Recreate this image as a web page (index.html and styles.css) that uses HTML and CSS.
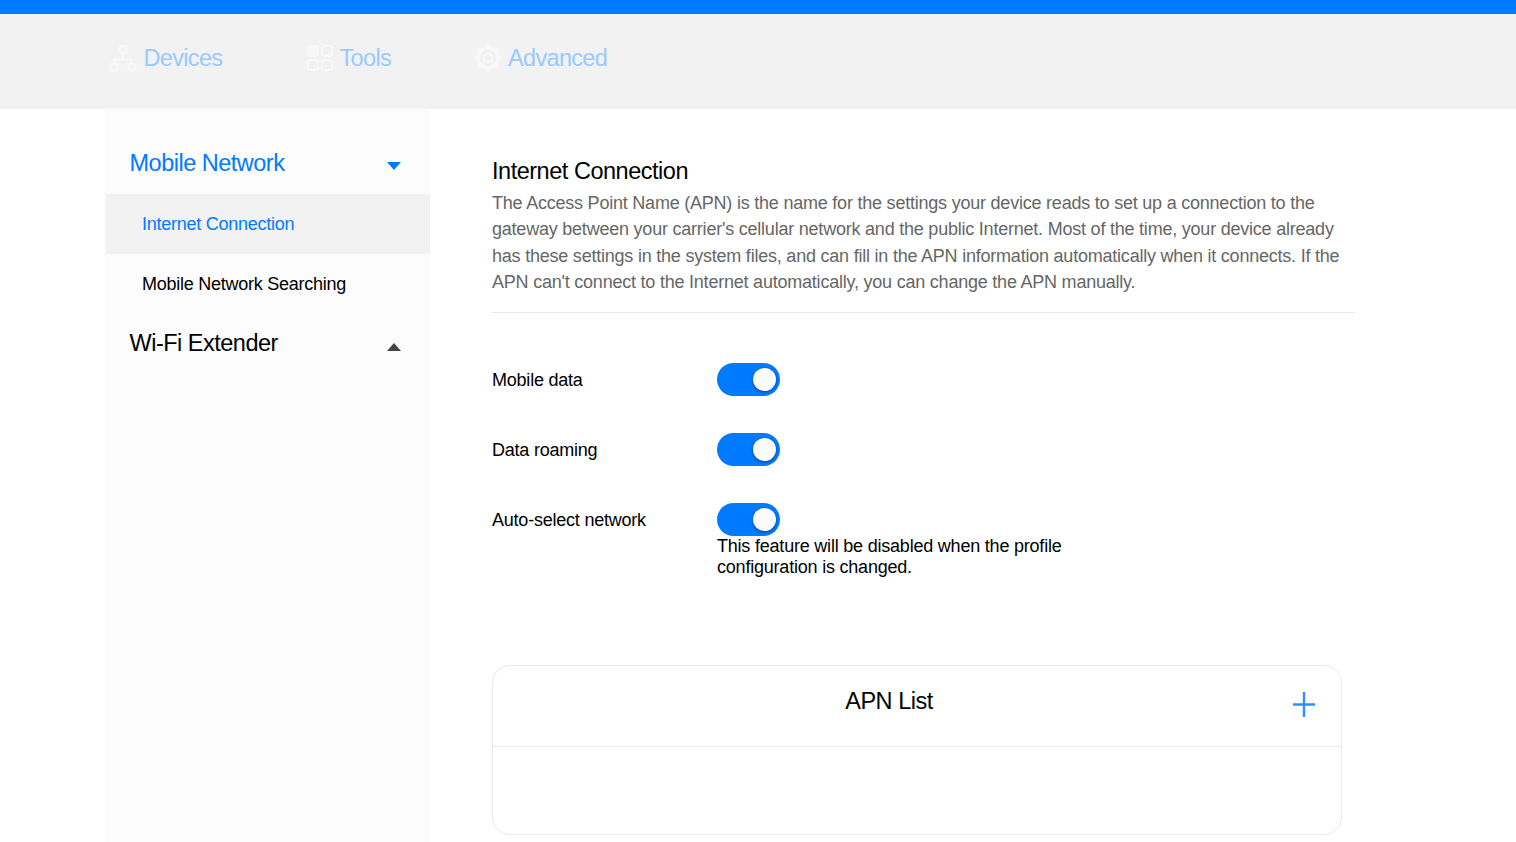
FILE: index.html
```html
<!DOCTYPE html>
<html lang="en">
<head>
<meta charset="utf-8">
<title>Internet Connection</title>
<link rel="stylesheet" href="styles.css">
</head>
<body>
<div class="topbar"></div>
<nav class="nav">
  <a class="nav-item nav-devices">
    <svg class="nav-icon" width="28" height="28" viewBox="0 0 28 28" fill="none" stroke="#f8f8f8" stroke-width="2.6">
      <circle cx="14" cy="5.500" r="3.600"/>
      <path d="M14 9.500v6M5.500 19v-3.500h17V19"/>
      <rect x="1.500" y="20" width="7" height="6.500" rx="2"/>
      <rect x="19.500" y="20" width="7" height="6.500" rx="2"/>
    </svg>
    <span>Devices</span>
  </a>
  <a class="nav-item nav-tools">
    <svg class="nav-icon" width="28" height="28" viewBox="0 0 28 28" fill="none" stroke="#f8f8f8" stroke-width="2.2">
      <rect x="2" y="2" width="10" height="10" rx="2.500" fill="#f8f8f8"/>
      <rect x="16" y="2" width="10" height="10" rx="2.500"/>
      <rect x="2" y="16" width="10" height="10" rx="2.500"/>
      <rect x="16" y="16" width="10" height="10" rx="2.500"/>
    </svg>
    <span>Tools</span>
  </a>
  <a class="nav-item nav-advanced">
    <svg class="nav-icon" width="30" height="30" viewBox="0 0 30 30" fill="none" stroke="#f8f8f8">
      <circle cx="15" cy="15" r="10" stroke-width="3.600"/>
      <circle cx="15" cy="15" r="4.200" stroke-width="2.600"/>
      <path d="M15 1v4M15 25v4M1 15h4M25 15h4M5 5l3 3M22 22l3 3M25 5l-3 3M8 22l-3 3" stroke-width="4.200"/>
    </svg>
    <span>Advanced</span>
  </a>
</nav>
<div class="layout">
  <aside class="sidebar">
    <div class="group-head head-active">
      <span>Mobile Network</span>
      <i class="caret caret-down"></i>
    </div>
    <a class="side-link side-link-active">Internet Connection</a>
    <a class="side-link">Mobile Network Searching</a>
    <div class="group-head head-plain">
      <span>Wi-Fi Extender</span>
      <i class="caret caret-up"></i>
    </div>
  </aside>
  <main class="content">
    <h1 class="title">Internet Connection</h1>
    <p class="desc">The Access Point Name (APN) is the name for the settings your device reads to set up a connection to the gateway between your carrier's cellular network and the public Internet. Most of the time, your device already has these settings in the system files, and can fill in the APN information automatically when it connects. If the APN can't connect to the Internet automatically, you can change the APN manually.</p>
    <div class="settings">
      <div class="row">
        <div class="row-label">Mobile data</div>
        <div class="row-value"><span class="switch"><span class="knob"></span></span></div>
      </div>
      <div class="row">
        <div class="row-label">Data roaming</div>
        <div class="row-value"><span class="switch"><span class="knob"></span></span></div>
      </div>
      <div class="row">
        <div class="row-label">Auto-select network</div>
        <div class="row-value">
          <span class="switch"><span class="knob"></span></span>
          <p class="note">This feature will be disabled when the profile configuration is changed.</p>
        </div>
      </div>
    </div>
    <section class="apn">
      <header class="apn-head">
        <h2 class="apn-title">APN List</h2>
        <svg class="apn-add" width="24" height="26" viewBox="0 0 24 26" fill="none" stroke="#2f8fff" stroke-width="2.400"><path d="M12 1v25M1 13.500h22"/></svg>
      </header>
      <div class="apn-body"></div>
    </section>
  </main>
</div>
</body>
</html>
```

FILE: styles.css
```css
* { box-sizing: border-box; }
html, body { margin: 0; padding: 0; height: 100%; overflow: hidden; }
body { background: #fff; color: #000; font-family: "Liberation Sans", Arial, sans-serif; display: flex; flex-direction: column; height: 842px; }
.topbar { height: 14px; background: #007aff; flex: none; }
.nav { height: 95px; flex: none; background: #f2f2f2; display: flex; align-items: center; padding: 0 0 7px 109px; }
.nav-item { display: flex; align-items: center; color: #99caff; font-size: 23.500px; letter-spacing: -0.67px; }
.nav-icon { flex: none; margin-right: 6.500px; }
.nav-devices { width: 197px; }
.nav-tools { width: 167px; }
.nav-tools .nav-icon { margin-right: 5.500px; }
.nav-advanced .nav-icon { margin-right: 5.500px; margin-left: -0.500px; }
.layout { flex: 1; display: flex; min-height: 0; padding-left: 105px; }
.sidebar { width: 325px; flex: none; background: #fcfcfc; padding-top: 25px; }
.group-head { height: 60px; display: flex; align-items: center; justify-content: space-between; padding: 0 29.500px 2px 24.500px; font-size: 23.500px; letter-spacing: -0.5px; }
.head-active { color: #007aff; }
.head-plain { color: #000; }
.caret { width: 0; height: 0; border-left: 7.500px solid transparent; border-right: 7.500px solid transparent; }
.caret-down { border-top: 8px solid #007aff; margin-top: 6px; }
.caret-up { border-bottom: 8px solid #444; margin-top: 8px; }
.side-link { display: flex; align-items: center; height: 60px; padding-left: 37px; font-size: 18px; letter-spacing: -0.25px; color: #000; }
.side-link-active { color: #007aff; background: #f2f2f2; }
.content { width: 863px; margin-left: 62px; padding-top: 47px; }
.title { margin: 0 0 4px; font-size: 23.500px; font-weight: 400; line-height: 30px; letter-spacing: -0.48px; color: #000; }
.desc { margin: 0; padding-bottom: 16px; border-bottom: 1px solid #e9e9e9; font-size: 18px; line-height: 26.400px; letter-spacing: -0.22px; color: #666; }
.settings { padding-top: 50px; }
.row { display: flex; margin-bottom: 37px; }
.row:last-child { margin-bottom: 0; }
.row-label { width: 225px; height: 33px; flex: none; font-size: 18px; letter-spacing: -0.22px; line-height: 35px; }
.row-value { width: 350px; }
.switch { display: block; position: relative; width: 63px; height: 33px; border-radius: 17px; background: #007aff; }
.knob { position: absolute; top: 5px; right: 4px; width: 23px; height: 23px; border-radius: 50%; background: #fbfbfb; box-shadow: 0 1px 3px rgba(0,0,0,.45); }
.note { margin: 0; font-size: 18px; line-height: 21px; letter-spacing: -0.21px; }
.apn { width: 850px; height: 170px; margin-top: 87px; border: 1px solid #e9e9e9; border-radius: 18px; }
.apn-head { height: 81px; display: flex; align-items: center; justify-content: center; position: relative; border-bottom: 1px solid #e9e9e9; }
.apn-title { margin: 0 56px 8px 0; font-size: 23.500px; font-weight: 400; letter-spacing: -0.48px; }
.apn-add { position: absolute; right: 25.500px; top: 25px; }
```
